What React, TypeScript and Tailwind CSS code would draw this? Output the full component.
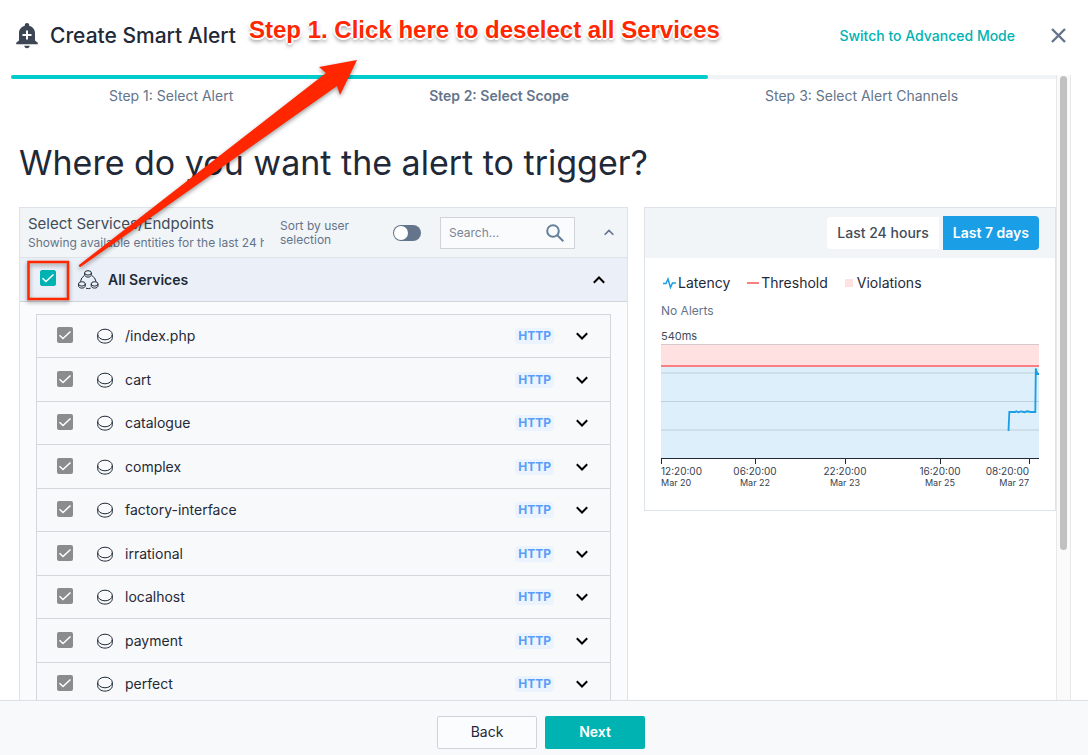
import { useState } from 'react';

const services = [
  '/index.php',
  'cart',
  'catalogue',
  'complex',
  'factory-interface',
  'irrational',
  'localhost',
  'payment',
  'perfect',
];

const ticks = [
  { x: 0, labelX: 0, time: '12:20:00', date: 'Mar 20', anchor: 'start' },
  { x: 94, labelX: 94, time: '06:20:00', date: 'Mar 22', anchor: 'middle' },
  { x: 184, labelX: 184, time: '22:20:00', date: 'Mar 23', anchor: 'middle' },
  { x: 279, labelX: 279, time: '16:20:00', date: 'Mar 25', anchor: 'middle' },
  { x: 368, labelX: 368, time: '08:20:00', date: 'Mar 27', anchor: 'end' },
] as const;

function BellPlusIcon() {
  return (
    <svg width="22" height="26" viewBox="0 0 22 26" aria-hidden="true">
      <path
        fill="#3d4653"
        d="M11 0c1.3 0 2.2.9 2.2 2.1v.7C16.700 3.700 19 6.600 19 10.200v7.300l2.800 2.300v1.400H.2v-1.400L3 17.500v-7.300C3 6.600 5.300 3.700 8.800 2.800v-.7C8.800.9 9.700 0 11 0ZM8.300 22.800h5.400c0 1.400-1.200 2.400-2.700 2.400s-2.700-1-2.700-2.400Z"
      />
      <path stroke="#fff" strokeWidth="2" d="M11 7.500v9M6.500 12h9" />
    </svg>
  );
}

function CheckMark() {
  return (
    <svg
      className="pointer-events-none col-start-1 row-start-1"
      width="16"
      height="16"
      viewBox="0 0 16 16"
      fill="none"
      aria-hidden="true"
    >
      <path d="M2.500 8.300 6 11.500 13.500 4.500" stroke="#fff" strokeWidth="1.500" />
    </svg>
  );
}

function Chevron({ up, small }: { up?: boolean; small?: boolean }) {
  return (
    <svg
      width={small ? 10 : 12}
      height={small ? 7 : 8}
      viewBox="0 0 12 8"
      fill="none"
      stroke="currentColor"
      strokeWidth="2"
      aria-hidden="true"
    >
      <path d={up ? 'M.8 6.700 6 1.500l5.200 5.200' : 'M.8 1.300 6 6.500l5.200-5.200'} />
    </svg>
  );
}

function DiscIcon() {
  return (
    <svg width="16" height="16" viewBox="0 0 16 16" fill="none" stroke="#1f2937" aria-hidden="true">
      <ellipse cx="8" cy="6.500" rx="7.300" ry="5.300" />
      <path d="M.7 6.500v3.300c0 2.900 3.300 5.300 7.300 5.300s7.300-2.400 7.300-5.300V6.500" />
    </svg>
  );
}

function ServicesIcon() {
  const nodes = [
    [10, 3.4],
    [3.9, 14.4],
    [16.6, 14.4],
  ];
  return (
    <svg width="21" height="20" viewBox="0 0 21 20" fill="none" stroke="#1f2937" aria-hidden="true">
      {nodes.map(([x, y]) => (
        <g key={`${x}-${y}`}>
          <ellipse cx={x} cy={y - 0.5} rx="3.400" ry="2.200" />
          <path d={`M${x - 3.4} ${y - 0.5}v1.900c0 1.300 1.500 2.300 3.400 2.300s3.400-1 3.400-2.300v-1.900`} />
        </g>
      ))}
      <path d="M6.300 5.500Q3 7.500 2.500 11.500M13.800 5.500Q17.300 7.500 18 11.500M8 18.200q2.400.9 4.600 0" />
    </svg>
  );
}

function LatencyChart() {
  return (
    <svg className="block w-full" viewBox="0 0 378 146" role="img" aria-label="Latency chart">
      <rect y="0" width="378" height="22" fill="#ffe1e2" />
      <rect y="22" width="378" height="92" fill="#dceffb" />
      <path d="M0 .5h378" stroke="#d6c8cf" />
      <path d="M0 57.500h378" stroke="#bcd0dd" />
      <path d="M0 29h378M0 86h378" stroke="#cddfea" strokeWidth="2" />
      <path d="M0 22h378" stroke="#f98080" strokeWidth="2" />
      <path
        d="M347.500 87 348.300 68h6l1-.7 2 .9 3-.8 3 .8 3-.9 3 .7h5l.5-43.500 1 5.500h2.500"
        fill="none"
        stroke="#1a9ee6"
        strokeWidth="1.800"
      />
      <path d="M374 24l3 4.500-3 3Z" fill="#1a9ee6" />
      <path d="M0 114.500h378" stroke="#1f2937" />
      {ticks.map((t) => (
        <g key={t.time} fill="#374151" textAnchor={t.anchor}>
          <path d={`M${t.x + 0.5} 115v5`} stroke="#1f2937" />
          <text x={t.labelX} y="131" fontSize="10">
            {t.time}
          </text>
          <text x={t.labelX} y="142" fontSize="9">
            {t.date}
          </text>
        </g>
      ))}
    </svg>
  );
}

function ServiceRow({ name }: { name: string }) {
  return (
    <li className="flex items-center border-b border-[#d3d6da] bg-[#f8f9fb] pr-[22px] pl-5 odd:h-[43px] even:h-[44px]">
      <label className="flex flex-1 items-center">
        <span className="mb-0.5 grid">
          <input
            type="checkbox"
            defaultChecked
            disabled
            className="col-start-1 row-start-1 size-4 appearance-none rounded-[2px] bg-[#8c8c8c]"
          />
          <CheckMark />
        </span>
        <span className="ml-6">
          <DiscIcon />
        </span>
        <span className="ml-3 text-sm text-[#1f2937]">{name}</span>
      </label>
      <span className="rounded bg-[#ebf4fe] px-[3px] text-xs leading-4 font-bold text-[#5a9df8]">HTTP</span>
      <button type="button" aria-label={`Expand ${name}`} className="ml-[22px] text-black">
        <Chevron />
      </button>
    </li>
  );
}

export default function App() {
  const [allSelected, setAllSelected] = useState(true);

  return (
    <div className="relative flex h-screen flex-col overflow-hidden bg-white font-['Inter',sans-serif] text-[#1f2937]">
      <header className="flex h-[75px] shrink-0 items-center pr-[22px] pb-1 pl-4">
        <BellPlusIcon />
        <h1 className="ml-3 text-[21px] leading-7 font-medium whitespace-nowrap">Create Smart Alert</h1>
        <a href="#advanced" className="ml-auto text-sm font-medium text-[#00b3b3]">
          Switch to Advanced Mode
        </a>
        <button type="button" aria-label="Close" className="ml-9">
          <svg width="15" height="15" viewBox="0 0 15 15" stroke="#64748b" strokeWidth="2.400" aria-hidden="true">
            <path d="M1 1l13 13M14 1 1 14" />
          </svg>
        </button>
      </header>

      <div className="flex min-h-0 flex-1 pr-[17px]">
        <main className="min-w-0 flex-1 overflow-hidden pl-[11px]">
          <div className="h-1 rounded-l bg-[#f1f4f6]">
            <div className="h-1 w-2/3 rounded bg-[#00cccc]" />
          </div>
          <ol className="mt-2 flex justify-around text-sm leading-[18px] text-[#64748b]">
            <li>Step 1: Select Alert</li>
            <li className="font-semibold">Step 2: Select Scope</li>
            <li>Step 3: Select Alert Channels</li>
          </ol>

          <div className="pl-2">
            <h2 className="mt-[34px] text-[34px] leading-[48px] whitespace-nowrap">
              Where do you want the alert to trigger?
            </h2>

            <div className="mt-5 flex items-start gap-4">
              <section className="min-w-0 flex-1 border border-[#dde3e8] bg-[#fafbfd]">
                <div className="flex h-[50px] items-center border-b border-[#dde3e8] bg-[#f2f5f7] pr-[13px] pl-2">
                  <div className="w-[236px] overflow-hidden whitespace-nowrap">
                    <h3 className="text-[15px] leading-5 text-[#414c5a]">Select Services/Endpoints</h3>
                    <p className="text-xs leading-[18px] text-[#64748b]">
                      Showing available entities for the last 24 hours
                    </p>
                  </div>
                  <label htmlFor="sort" className="ml-4 w-24 text-xs leading-[14px] text-[#64748b]">
                    Sort by user selection
                  </label>
                  <input
                    id="sort"
                    type="checkbox"
                    role="switch"
                    className="ml-[17px] h-4 w-7 shrink-0 appearance-none rounded-full bg-[#64748b] before:mt-px before:ml-px before:block before:size-[14px] before:rounded-full before:bg-white"
                  />
                  <div className="ml-[19px] flex h-8 w-[135px] shrink-0 items-center border border-[#d0d4d9] bg-[#fafbfd] pr-2.5 pl-2">
                    <input
                      type="text"
                      aria-label="Search"
                      placeholder="Search..."
                      className="min-w-0 flex-1 bg-transparent text-xs outline-none placeholder:text-[#7c8592]"
                    />
                    <svg width="18" height="18" viewBox="0 0 18 18" fill="none" stroke="#64809b" strokeWidth="2" aria-hidden="true">
                      <circle cx="7" cy="7" r="5.800" />
                      <path d="m11 11 6.300 6.300" />
                    </svg>
                  </div>
                  <button type="button" aria-label="Collapse panel" className="ml-auto text-[#64748b]">
                    <Chevron up small />
                  </button>
                </div>

                <div className="flex h-11 items-center border-b border-[#d0d5dc] bg-[#ebeff7] pr-[22px] pl-5">
                  <label className="flex flex-1 items-center">
                    <span className="mb-1 grid">
                      <input
                        type="checkbox"
                        checked={allSelected}
                        onChange={(e) => setAllSelected(e.target.checked)}
                        className="col-start-1 row-start-1 size-4 appearance-none rounded-[2px] border border-[#00b3b3] checked:bg-[#00b3b3]"
                      />
                      <CheckMark />
                    </span>
                    <span className="ml-[22px]">
                      <ServicesIcon />
                    </span>
                    <span className="ml-[9px] text-sm font-semibold">All Services</span>
                  </label>
                  <button type="button" aria-label="Collapse all services" className="text-black">
                    <Chevron up />
                  </button>
                </div>

                <ul className="mx-4 mt-3 border border-b-0 border-[#d3d6da]">
                  {services.map((name) => (
                    <ServiceRow key={name} name={name} />
                  ))}
                </ul>
              </section>

              <section className="w-[412px] shrink-0 border border-[#dde3e8]">
                <div className="flex h-[50px] items-center justify-end gap-1 bg-[#f2f5f7] pr-4 text-sm font-medium">
                  <button type="button" className="h-8 rounded-l bg-white px-2.5 text-[#414c5a]">
                    Last 24 hours
                  </button>
                  <button type="button" className="h-[34px] rounded-r-sm bg-[#1a9ee6] px-2.5 font-semibold text-white">
                    Last 7 days
                  </button>
                </div>
                <div className="px-4 pt-4 pb-5">
                  <div className="flex items-center gap-[17px] text-sm leading-[18px]">
                    <span className="flex items-center gap-0.5 pl-0.5">
                      <svg width="13" height="12" viewBox="0 0 13 12" fill="none" stroke="#1a9ee6" strokeWidth="1.500" aria-hidden="true">
                        <path d="M0 6.500h3L5 2l2.500 8.500 2-4.500H13" />
                      </svg>
                      Latency
                    </span>
                    <span className="flex items-center gap-0.5">
                      <span className="h-0.5 w-3 bg-[#f98080]" />
                      Threshold
                    </span>
                    <span className="flex items-center gap-1">
                      <span className="size-2 bg-[#ffe1e2]" />
                      Violations
                    </span>
                  </div>
                  <p className="mt-2.5 text-xs leading-[18px] text-[#64748b]">No Alerts</p>
                  <p className="mt-2 text-[11px] leading-4 text-[#414c5a]">540ms</p>
                  <LatencyChart />
                </div>
              </section>
            </div>
          </div>
        </main>
        <div className="w-[15px] shrink-0 border-x border-[#e8e8e8] bg-[#fafafa] px-[3px] pt-px">
          <div className="h-[76%] rounded-full bg-[#c1c1c1]" />
        </div>
      </div>

      <footer className="flex h-[55px] shrink-0 items-center justify-center gap-2 border-t border-[#dde1e6] bg-[#f8f9fb] pt-2 pr-[6px] text-sm">
        <button type="button" className="h-[33px] w-[100px] rounded-[2px] border border-[#d0d4d9] bg-[#fbfcfd]">
          Back
        </button>
        <button type="button" className="h-[33px] w-[100px] rounded-[2px] bg-[#00b3b3] font-semibold text-white">
          Next
        </button>
      </footer>

      <p className="pointer-events-none absolute top-4 left-[249px] text-2xl leading-7 font-bold whitespace-nowrap text-[#ff2600] font-['Liberation_Sans',sans-serif] [text-shadow:-2px_0_#fff,2px_0_#fff,0_-2px_#fff,0_2px_#fff,-1px_-1px_#fff,1px_1px_#fff,0_3px_4px_#777]">
        Step 1. Click here to deselect all Services
      </p>
      <svg
        className="pointer-events-none absolute top-0 left-0 drop-shadow-[0_2px_2px_rgba(0,0,0,0.4)]"
        width="380"
        height="310"
        viewBox="0 0 380 310"
        aria-hidden="true"
      >
        <path fill="#ff2600" d="M357 60 319 67 326 73 79 265q-.5 2 1.500 2L337 86l3 9Z" />
        <rect x="28.500" y="262" width="39.500" height="37" fill="none" stroke="#ff2600" strokeWidth="2.500" />
      </svg>
    </div>
  );
}
